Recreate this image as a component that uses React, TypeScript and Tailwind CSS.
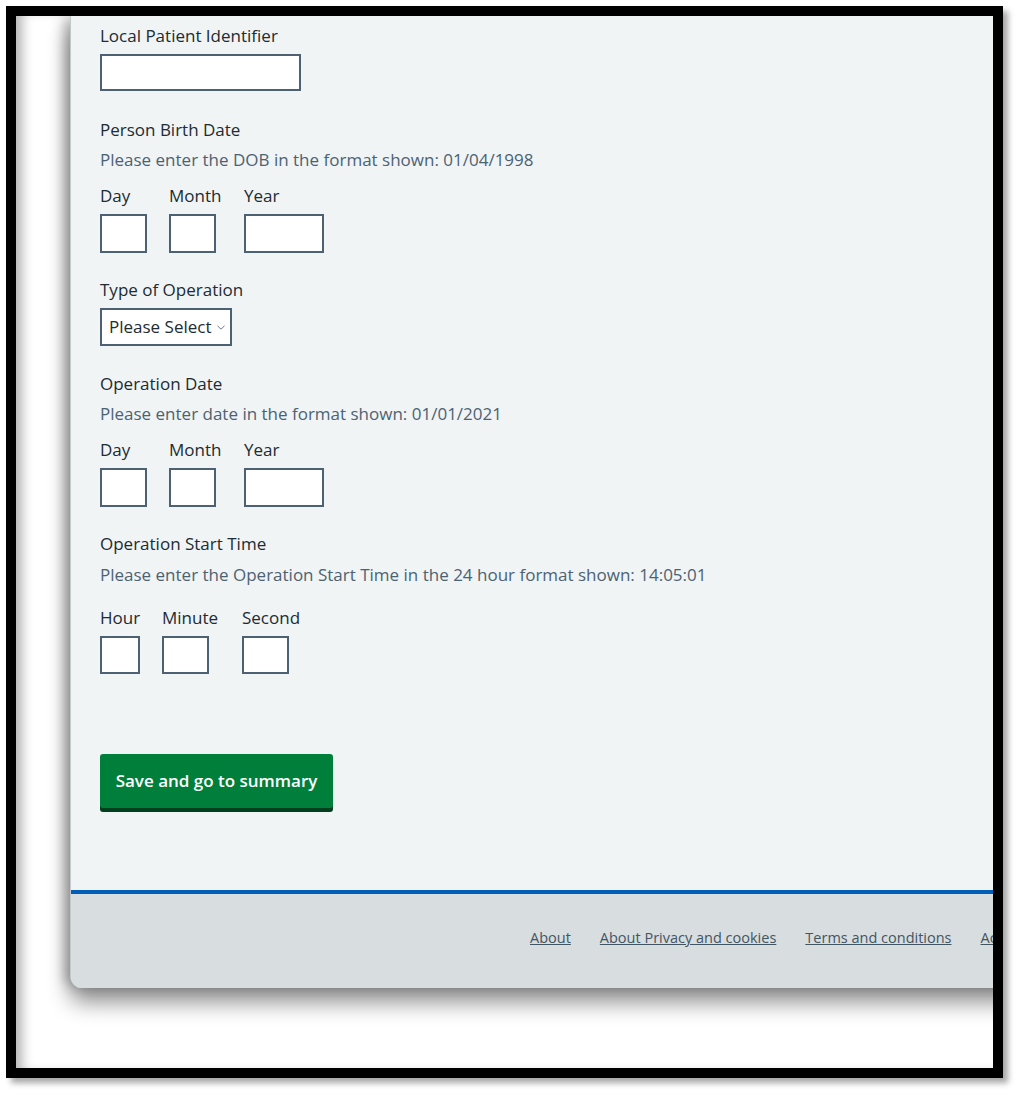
import React from "react";

const font = { fontFamily: '"Open Sans", "Noto Sans", Arial, sans-serif' };

function DateRow() {
  return (
    <div className="flex">
      <div className="w-[69px] flex flex-col">
        <div className="h-[24px] leading-[24px]">Day</div>
        <div className="mt-[6px] w-[47px] h-[39px] border-2 border-[#4c6272] bg-white" />
      </div>
      <div className="w-[75px] flex flex-col">
        <div className="h-[24px] leading-[24px]">Month</div>
        <div className="mt-[6px] w-[47px] h-[39px] border-2 border-[#4c6272] bg-white" />
      </div>
      <div className="flex flex-col">
        <div className="h-[24px] leading-[24px]">Year</div>
        <div className="mt-[6px] w-[80px] h-[39px] border-2 border-[#4c6272] bg-white" />
      </div>
    </div>
  );
}

export default function App() {
  return (
    <div className="w-[1021px] h-[1097px] bg-white pt-[6px] pl-[6px]" style={font}>
      <div className="w-[997px] h-[1072px] border-[10px] border-black bg-white overflow-hidden shadow-[5px_5px_6px_rgba(0,0,0,0.35)]">
        <div className="w-full h-full shadow-[inset_12px_0_12px_-6px_rgba(0,0,0,0.3)] pl-[54px]">
          <div className="w-[1100px] h-[972px] bg-[#f0f4f5] border-l border-[#c4c9cc] rounded-bl-[12px] flex flex-col shadow-[-8px_0_12px_-2px_rgba(0,0,0,0.25),0_14px_22px_rgba(0,0,0,0.45)] overflow-hidden">
            <div className="pl-[29px] pt-[8px] flex flex-col items-start text-[#212b32] text-[17px]">
              <div className="h-[24px] leading-[24px]">Local Patient Identifier</div>
              <div className="mt-[6px] w-[201px] h-[37px] border-2 border-[#4c6272] bg-white" />

              <div className="mt-[27px] h-[24px] leading-[24px]">Person Birth Date</div>
              <div className="mt-[6px] h-[24px] leading-[24px] text-[#4c6272]">
                Please enter the DOB in the format shown: 01/04/1998
              </div>
              <div className="mt-[12px]">
                <DateRow />
              </div>

              <div className="mt-[25px] h-[24px] leading-[24px]">Type of Operation</div>
              <div className="mt-[6px] w-[132px] h-[38px] border-2 border-[#4c6272] bg-white flex items-center pl-[7px] pr-[5px] justify-between">
                <span className="text-[17px] text-[#212b32]">Please Select</span>
                <svg width="8" height="5" viewBox="0 0 8 5" className="mt-[1px]">
                  <path d="M0.5 0.8 L4 4.2 L7.5 0.8" fill="none" stroke="#6b7780" strokeWidth="1" />
                </svg>
              </div>

              <div className="mt-[26px] h-[24px] leading-[24px]">Operation Date</div>
              <div className="mt-[6px] h-[24px] leading-[24px] text-[#4c6272]">
                Please enter date in the format shown: 01/01/2021
              </div>
              <div className="mt-[12px]">
                <DateRow />
              </div>

              <div className="mt-[25px] h-[24px] leading-[24px]">Operation Start Time</div>
              <div className="mt-[7px] h-[24px] leading-[24px] text-[#4c6272]">
                Please enter the Operation Start Time in the 24 hour format shown: 14:05:01
              </div>
              <div className="mt-[19px] flex">
                <div className="w-[62px] flex flex-col">
                  <div className="h-[24px] leading-[24px]">Hour</div>
                  <div className="mt-[6px] w-[40px] h-[38px] border-2 border-[#4c6272] bg-white" />
                </div>
                <div className="w-[80px] flex flex-col">
                  <div className="h-[24px] leading-[24px]">Minute</div>
                  <div className="mt-[6px] w-[47px] h-[38px] border-2 border-[#4c6272] bg-white" />
                </div>
                <div className="flex flex-col">
                  <div className="h-[24px] leading-[24px]">Second</div>
                  <div className="mt-[6px] w-[47px] h-[38px] border-2 border-[#4c6272] bg-white" />
                </div>
              </div>

              <button className="mt-[80px] w-[233px] h-[54px] bg-[#007f3b] rounded-[3px] shadow-[0_4px_0_#00401e] text-white font-semibold text-[17px] flex items-center justify-center">
                Save and go to summary
              </button>
            </div>

            <div className="mt-[82px] border-t-4 border-[#005eb8] bg-[#d8dde0] flex-1 flex items-start pl-[459px] pt-[34px] gap-[29px] text-[14.5px] text-[#425563] whitespace-nowrap">
              <span className="underline leading-[20px]">About</span>
              <span className="underline leading-[20px]">About Privacy and cookies</span>
              <span className="underline leading-[20px]">Terms and conditions</span>
              <span className="underline leading-[20px]">Accessibility statement</span>
            </div>
          </div>
        </div>
      </div>
    </div>
  );
}
